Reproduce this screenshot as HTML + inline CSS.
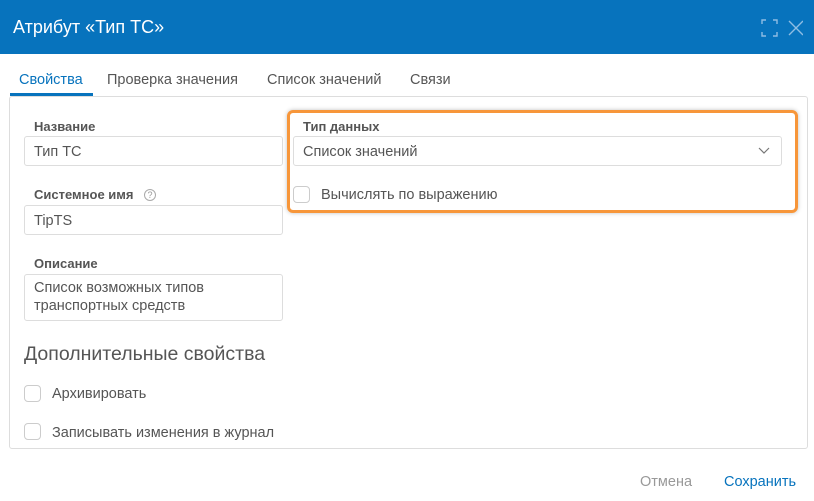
<!DOCTYPE html>
<html><head><meta charset="utf-8"><style>
*{box-sizing:border-box;margin:0;padding:0}
body{width:814px;height:501px;background:#fff;font-family:"Liberation Sans",sans-serif;color:#444;position:relative;overflow:hidden}
.a{position:absolute;white-space:nowrap}
.hdr{left:0;top:0;width:814px;height:54px;background:#0773bd}
.lbl{font-size:13px;font-weight:bold;color:#555}
.inp{border:1px solid #ddd;border-radius:3px;background:#fff;font-size:14.5px;color:#555;padding:7px 9px}
.cb{width:17px;height:17px;border:1px solid #ccc;border-radius:4px;background:#fff}
.t{font-size:14.5px;color:#555}
</style></head><body>
<div class="a hdr"></div>
<div class="a" style="left:13px;top:17px;font-size:18px;color:#fff">Атрибут «Тип ТС»</div>
<svg class="a" style="left:761px;top:19px" width="42" height="18" viewBox="0 0 42 18" fill="none" stroke="#8fbde3" stroke-width="1.4">
<path d="M1 5V1h4M12 1h4v4M16 13v4h-4M5 17H1v-4"/><path d="M28 2l14 14M42 2L28 16"/></svg>
<div class="a t" style="left:19px;top:72px;color:#0773bd">Свойства</div>
<div class="a t" style="left:107px;top:72px">Проверка значения</div>
<div class="a t" style="left:267px;top:72px">Список значений</div>
<div class="a t" style="left:410px;top:72px">Связи</div>
<div class="a" style="left:9px;top:96px;width:799px;height:353px;border:1px solid #ddd;border-radius:3px"></div>
<div class="a" style="left:10px;top:93px;width:83px;height:3px;background:#0773bd"></div>
<div class="a lbl" style="left:34px;top:119px">Название</div>
<div class="a inp" style="left:24px;top:136px;width:259px;height:30px">Тип ТС</div>
<div class="a lbl" style="left:34px;top:187px">Системное имя</div>
<div class="a" style="left:144px;top:189px;width:12px;height:12px;border:1px solid #aaa;border-radius:50%;font-size:9px;color:#999;text-align:center;line-height:10px">?</div>
<div class="a inp" style="left:24px;top:205px;width:259px;height:30px">TipTS</div>
<div class="a lbl" style="left:34px;top:256px">Описание</div>
<div class="a inp" style="left:24px;top:274px;width:259px;height:47px;white-space:normal;line-height:18px;padding:4px 9px">Список возможных типов транспортных средств</div>
<div class="a" style="left:287px;top:110px;width:511px;height:103px;border:3px solid #f7963a;border-radius:6px;box-shadow:0 0 4px rgba(0,0,0,.25)"></div>
<div class="a lbl" style="left:303px;top:119px">Тип данных</div>
<div class="a inp" style="left:293px;top:136px;width:489px;height:30px">Список значений</div>
<svg class="a" style="left:758px;top:147px" width="12" height="8" viewBox="0 0 12 8" fill="none" stroke="#777" stroke-width="1.2"><path d="M1 1l5 5 5-5"/></svg>
<div class="a cb" style="left:293px;top:186px"></div>
<div class="a t" style="left:321px;top:187px">Вычислять по выражению</div>
<div class="a" style="left:24px;top:343px;font-size:19.5px;color:#555">Дополнительные свойства</div>
<div class="a cb" style="left:24px;top:385px"></div>
<div class="a t" style="left:52px;top:386px">Архивировать</div>
<div class="a cb" style="left:24px;top:423px"></div>
<div class="a t" style="left:52px;top:425px">Записывать изменения в журнал</div>
<div class="a t" style="left:640px;top:474px;color:#999">Отмена</div>
<div class="a t" style="left:724px;top:474px;color:#0773bd">Сохранить</div>
</body></html>
